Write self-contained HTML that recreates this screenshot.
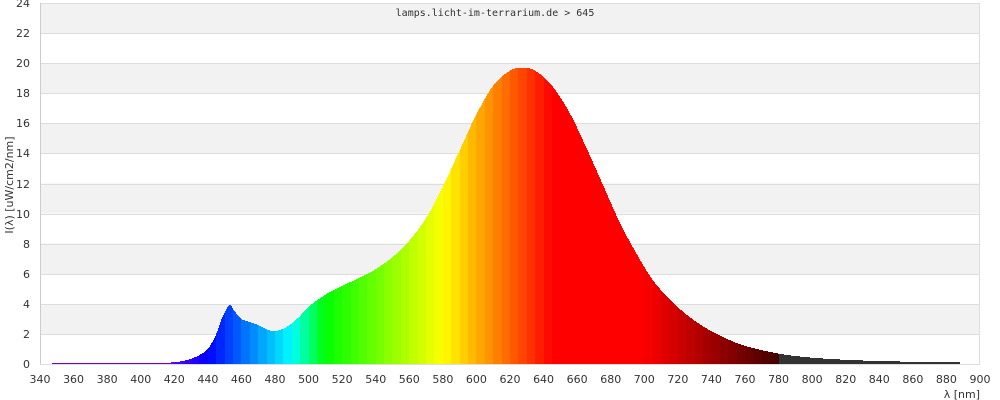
<!DOCTYPE html>
<html><head><meta charset="utf-8"><style>
body{margin:0;width:1000px;height:400px;background:#fff;overflow:hidden;font-family:"DejaVu Sans","Liberation Sans",sans-serif}
svg{display:block}
</style></head><body>
<svg id="s" width="1000" height="400" xmlns="http://www.w3.org/2000/svg">
<g id="bg" shape-rendering="crispEdges"></g>
<g id="bars" shape-rendering="crispEdges"></g>
<g id="lab" font-size="11" fill="#333"></g>
<text x="495" y="16" text-anchor="middle" font-family="'DejaVu Sans Mono','Liberation Mono',monospace" font-size="10" fill="#333">lamps.licht-im-terrarium.de &gt; 645</text>
<text x="980" y="398" text-anchor="end" font-size="11" fill="#333">λ [nm]</text>
<text transform="translate(13,185) rotate(-90)" text-anchor="middle" font-size="11" fill="#333">I(λ) [uW/cm2/nm]</text>
</svg>
<script>
var L=40,R=980,T=3,B=364;
function X(n){return L+(n-340)*(R-L)/560}
function N(x){return 340+(x-L)*560/(R-L)}
function Y(v){return B-v*(B-T)/24}
var bg='',lab='';
for(var i=0;i<12;i++){var y0=Y(2*i+2),y1=Y(2*i);
 bg+='<rect x="'+L+'" y="'+y0+'" width="'+(R-L)+'" height="'+(y1-y0)+'" fill="'+(i%2?'#f2f2f2':'#fff')+'"/>';}
for(var i=0;i<=12;i++){var y=Math.round(Y(2*i));
 bg+='<rect x="'+L+'" y="'+y+'" width="'+(R-L)+'" height="1" fill="#ddd"/>';
 lab+='<text x="30" y="'+(y+4)+'" text-anchor="end">'+(2*i)+'</text>';}
bg+='<rect x="'+L+'" y="'+T+'" width="1" height="'+(B-T)+'" fill="#ccc"/>';
bg+='<rect x="'+(R-1)+'" y="'+T+'" width="1" height="'+(B-T)+'" fill="#ddd"/>';
for(var n=340;n<=900;n+=20){lab+='<text x="'+X(n)+'" y="383" text-anchor="middle">'+n+'</text>';}
document.getElementById('bg').innerHTML=bg;
document.getElementById('lab').innerHTML=lab;
var P=[[345,0.05],[400,0.05],[415,0.08],[420,0.12],[425,0.2],[430,0.35],[435,0.6],[440,1.0],[445,2.0],[449,3.2],[453,3.9],[456,3.5],[460,3.0],[466,2.75],[470,2.6],[475,2.3],[480,2.2],[485,2.35],[490,2.7],[495,3.2],[500,3.8],[510,4.6],[520,5.2],[530,5.7],[540,6.3],[550,7.1],[560,8.2],[570,9.7],[580,11.8],[590,14.2],[600,16.6],[610,18.5],[620,19.5],[628,19.7],[635,19.5],[645,18.5],[655,16.8],[665,14.5],[675,12.0],[685,9.5],[695,7.4],[705,5.6],[715,4.3],[725,3.3],[735,2.5],[745,1.9],[755,1.4],[765,1.05],[775,0.8],[785,0.6],[800,0.42],[820,0.28],[840,0.2],[860,0.15],[888,0.1]];
function h(n){for(var i=0;i<P.length-1;i++){if(n>=P[i][0]&&n<=P[i+1][0]){
 var p0=P[Math.max(0,i-1)],p1=P[i],p2=P[i+1],p3=P[Math.min(P.length-1,i+2)];
 var t=(n-p1[0])/(p2[0]-p1[0]);
 var m1=(p2[1]-p0[1])/(p2[0]-p0[0])*(p2[0]-p1[0]),m2=(p3[1]-p1[1])/(p3[0]-p1[0])*(p2[0]-p1[0]);
 var t2=t*t,t3=t2*t;
 return (2*t3-3*t2+1)*p1[1]+(t3-2*t2+t)*m1+(-2*t3+3*t2)*p2[1]+(t3-t2)*m2;}}return 0}
function col(n){var q=Math.floor(n/5)*5+2.5,r,g,b;
 if(q<420){r=0.45;g=0;b=0.85}
 else if(q<440){r=(440-q)/60;g=0;b=1}
 else if(q<490){r=0;g=(q-440)/50;b=1}
 else if(q<510){r=0;g=1;b=(510-q)/20}
 else if(q<580){r=(q-510)/70;g=1;b=0}
 else if(q<645){r=1;g=(645-q)/65;b=0}
 else if(q<700){r=1;g=0;b=0}
 else if(q<781){r=1-(q-700)/80*0.75;g=0;b=0}
 else return '#333';
 return 'rgb('+Math.round(r*255)+','+Math.round(g*255)+','+Math.round(b*255)+')';}
var s='';
for(var x=Math.round(X(347));x<Math.round(X(888));x++){var n=N(x+0.5);var v=h(n);if(v<=0)continue;var y=Math.round(Y(v));
 if(y>=B)y=B-1;
 s+='<rect x="'+x+'" y="'+y+'" width="1" height="'+(B-y)+'" fill="'+col(n)+'"/>';}
document.getElementById('bars').innerHTML=s;
</script>
</body></html>
